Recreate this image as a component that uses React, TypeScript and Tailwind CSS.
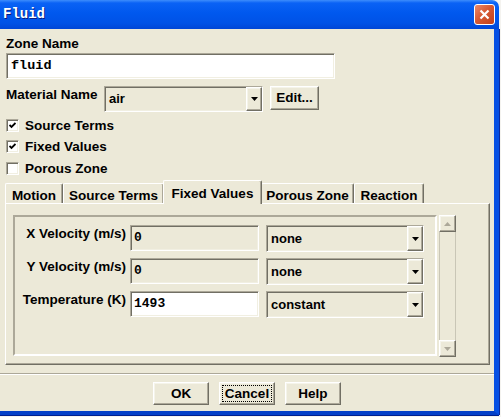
import React from "react";

// classic 3D bevels
const sunken =
  "border border-t-[#aca899] border-l-[#aca899] border-b-white border-r-white shadow-[inset_1px_1px_0_#716f64,inset_-1px_-1px_0_#f1efe2]";
const raised =
  "border border-t-white border-l-white border-b-[#716f64] border-r-[#716f64] shadow-[inset_-1px_-1px_0_#aca899,inset_1px_1px_0_#f5f4ea]";

const sans = "font-['Liberation_Sans',Arial,sans-serif]";
const mono = "font-['Liberation_Mono','Courier_New',monospace]";

function Arrow({ color = "#000", up = false }: { color?: string; up?: boolean }) {
  return (
    <svg width="7" height="4" viewBox="0 0 7 4">
      <path d={up ? "M0 4 L7 4 L3.5 0 Z" : "M0 0 L7 0 L3.5 4 Z"} fill={color} />
    </svg>
  );
}

function Combo({
  value,
  className,
  bold = true,
}: {
  value: string;
  className: string;
  bold?: boolean;
}) {
  return (
    <div className={`flex bg-[#ece9d8] ${sunken} ${className}`}>
      <div
        className={`flex-1 flex items-center pl-[4px] text-[13px] text-black ${sans} ${
          bold ? "font-bold" : ""
        }`}
      >
        {value}
      </div>
      <div className={`w-[16px] bg-[#ece9d8] flex items-center justify-center ${raised}`}>
        <Arrow />
      </div>
    </div>
  );
}

function Check({ label, checked }: { label: string; checked: boolean }) {
  return (
    <div className="flex items-center h-[13px] pl-[6px]">
      <div
        className={`w-[13px] h-[13px] bg-white flex items-center justify-center ${sunken}`}
      >
        {checked && (
          <svg width="7" height="7" viewBox="0 0 7 7">
            <path d="M0.5 3 L2.5 5 L6.5 1" stroke="#000" strokeWidth="1.8" fill="none" />
          </svg>
        )}
      </div>
      <span className="ml-[6px] leading-[13px]">{label}</span>
    </div>
  );
}

function Button({ label, focus = false }: { label: string; focus?: boolean }) {
  return (
    <div
      className={`w-[56px] h-[23px] bg-[#ece9d8] p-[2px] flex ${raised}`}
    >
      <div
        className={`flex-1 flex items-center justify-center leading-none ${
          focus ? "border border-dotted border-black" : ""
        }`}
      >
        {label}
      </div>
    </div>
  );
}

const tabs = [
  { label: "Motion", w: "w-[58px]" },
  { label: "Source Terms", w: "w-[101px]" },
  { label: "Fixed Values", w: "w-[99px]", active: true },
  { label: "Porous Zone", w: "w-[93px]" },
  { label: "Reaction", w: "w-[70px]" },
];

const rows = [
  { label: "X Velocity (m/s)", value: "0", mode: "none", enabled: false },
  { label: "Y Velocity (m/s)", value: "0", mode: "none", enabled: false },
  { label: "Temperature (K)", value: "1493", mode: "constant", enabled: true },
];

export default function App() {
  return (
    <div className="w-[501px] h-[417px] bg-[#f4f3ef] overflow-hidden">
      <div className="w-[499px] h-[415px] flex flex-col">
        {/* title bar */}
        <div className="h-[29px] rounded-tr-[7px] bg-[linear-gradient(to_bottom,#3d8dfc_0px,#0a62f5_3px,#0058ee_45%,#0052e6_80%,#0046d6_100%)] flex items-center pl-[3px] pr-[4px] shrink-0">
          <span
            className={`text-white font-bold text-[14px] ${mono} [text-shadow:1px_1px_0_#0a1f80]`}
          >
            Fluid
          </span>
          <div className="ml-auto w-[21px] h-[21px] rounded-[3px] border border-white bg-[linear-gradient(135deg,#ea8a6a,#d65a34_45%,#c2401a)] flex items-center justify-center">
            <svg width="11" height="11" viewBox="0 0 11 11">
              <path d="M1.5 1.5 L9.5 9.5 M9.5 1.5 L1.5 9.5" stroke="#fff" strokeWidth="2.2" />
            </svg>
          </div>
        </div>

        {/* dialog body */}
        <div
          className={`flex-1 bg-[#ece9d8] border-r-[5px] border-b-[4px] border-r-[#0650e4] border-b-[#0440c8] shadow-[1px_0_0_#0a2aa0,0_1px_0_#002090] flex flex-col text-black text-[13.5px] font-bold ${sans}`}
        >
          <div className="pt-[7px] pl-[6px] leading-[16px]">Zone Name</div>
          <div
            className={`ml-[6px] mt-[1px] w-[329px] h-[26px] bg-white flex items-center pl-[4px] ${sunken}`}
          >
            <span className={`${mono} text-[13.5px] font-bold`}>fluid</span>
          </div>

          <div className="flex mt-[7px] pl-[6px]">
            <span className="w-[98px] leading-[16px] pt-[1px]">Material Name</span>
            <Combo value="air" bold={false} className="w-[159px] h-[26px]" />
            <div
              className={`ml-[7px] w-[49px] h-[24px] bg-[#ece9d8] flex items-center justify-center ${raised}`}
            >
              Edit...
            </div>
          </div>

          <div className="mt-[7px] flex flex-col gap-[8px]">
            <Check label="Source Terms" checked />
            <Check label="Fixed Values" checked />
            <div className="mt-[1px]">
              <Check label="Porous Zone" checked={false} />
            </div>
          </div>

          {/* tab strip */}
          <div className="mt-[5px] ml-[5px] flex items-end h-[23px]">
            {tabs.map((t) =>
              t.active ? (
                <div
                  key={t.label}
                  className={`${t.w} h-[24px] -mb-px relative z-10 -mx-[1px] bg-[#ece9d8] rounded-t-[2px] border-t border-l border-white border-r border-r-[#716f64] shadow-[inset_-1px_0_0_#aca899] flex justify-center pt-[3px]`}
                >
                  {t.label}
                </div>
              ) : (
                <div
                  key={t.label}
                  className={`${t.w} h-[20px] bg-[#ece9d8] rounded-t-[2px] border-t border-l border-white border-r border-r-[#716f64] shadow-[inset_-1px_0_0_#aca899] flex justify-center pt-[2px]`}
                >
                  {t.label}
                </div>
              )
            )}
          </div>

          {/* tab page */}
          <div
            className={`ml-[5px] w-[485px] h-[162px] bg-[#ece9d8] border border-t-white border-l-white border-b-[#716f64] border-r-[#716f64] shadow-[inset_-1px_-1px_0_#aca899] flex pl-[7px] pt-[11px]`}
          >
            <div
              className={`w-[424px] h-[141px] border-2 border-t-[#aca899] border-l-[#aca899] border-b-white border-r-white flex flex-col pt-[8px] gap-[7px]`}
            >
              {rows.map((r) => (
                <div key={r.label} className="flex items-start h-[26px]">
                  <span className="w-[111px] text-right leading-[16px] pt-[1px]">
                    {r.label}
                  </span>
                  <div
                    className={`ml-[4px] w-[129px] h-[26px] flex items-center pl-[3px] ${sunken} ${
                      r.enabled ? "bg-white" : "bg-[#ece9d8]"
                    }`}
                  >
                    <span className={`${mono} text-[13px] font-bold`}>{r.value}</span>
                  </div>
                  <Combo value={r.mode} className="ml-[7px] w-[158px] h-[27px]" />
                </div>
              ))}
            </div>

            {/* scroll bar, disabled */}
            <div className="ml-[2px] w-[17px] h-[142px] flex flex-col">
              <div className={`h-[17px] flex items-center justify-center ${raised}`}>
                <Arrow color="#aca899" up />
              </div>
              <div className="flex-1 border-x border-l-[#c9c6b6] border-r-[#c9c6b6]" />
              <div className={`h-[17px] flex items-center justify-center ${raised}`}>
                <Arrow color="#aca899" />
              </div>
            </div>
          </div>

          <div className="mt-[8px] h-[2px] border-t border-t-[#aca899] border-b border-b-white" />

          <div className="mt-[7px] flex justify-center gap-[10px]">
            <Button label="OK" />
            <Button label="Cancel" focus />
            <Button label="Help" />
          </div>
        </div>
      </div>
    </div>
  );
}
